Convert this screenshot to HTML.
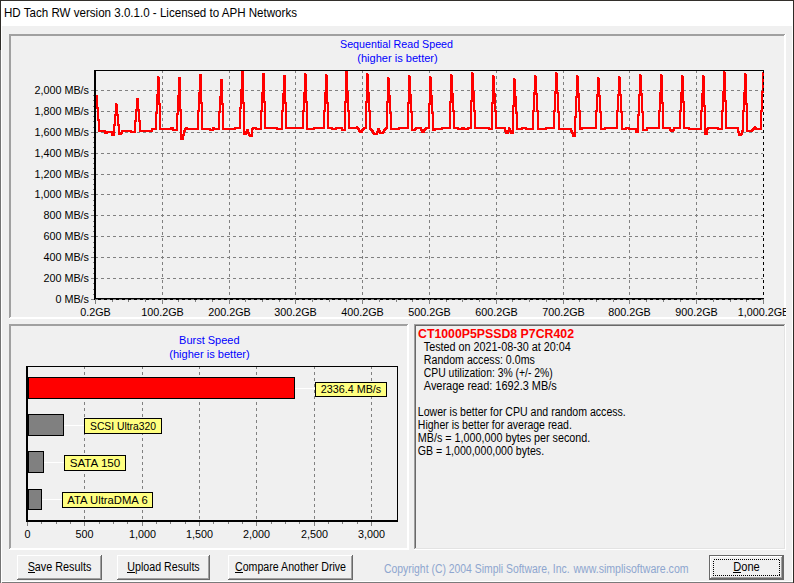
<!DOCTYPE html>
<html><head><meta charset="utf-8"><title>HD Tach RW</title><style>
html,body{margin:0;padding:0;background:#f0f0f0;width:794px;height:583px;overflow:hidden;font-family:"Liberation Sans",sans-serif}
svg{display:block}
svg text{shape-rendering:auto}
</style></head><body><svg width="794" height="583" viewBox="0 0 794 583" font-family="Liberation Sans, sans-serif" shape-rendering="crispEdges"><rect x="0" y="0" width="794" height="583" fill="#f0f0f0"/><rect x="0" y="0" width="794" height="26" fill="#ffffff"/><rect x="0" y="0" width="794" height="1" fill="#332f2b"/><rect x="0" y="0" width="1" height="583" fill="#2e2b27"/><rect x="0" y="50" width="1" height="533" fill="#737373"/><rect x="793" y="0" width="1" height="583" fill="#2e2b27"/><rect x="1" y="26" width="1" height="556" fill="#ffffff"/><rect x="792" y="26" width="1" height="556" fill="#ffffff"/><text x="4" y="16.8" font-size="12.4" textLength="293.0" lengthAdjust="spacingAndGlyphs">HD Tach RW version 3.0.1.0 - Licensed to APH Networks</text><rect x="9" y="34" width="777" height="1" fill="#a0a0a0"/><rect x="9" y="34" width="1" height="285" fill="#a0a0a0"/><rect x="10" y="35" width="775" height="1" fill="#a0a0a0"/><rect x="10" y="35" width="1" height="283" fill="#a0a0a0"/><rect x="9" y="318" width="777" height="1" fill="#ffffff"/><rect x="785" y="34" width="1" height="285" fill="#ffffff"/><rect x="10" y="317" width="775" height="1" fill="#ffffff"/><rect x="784" y="35" width="1" height="283" fill="#ffffff"/><rect x="9" y="324" width="400" height="1" fill="#a0a0a0"/><rect x="9" y="324" width="1" height="226" fill="#a0a0a0"/><rect x="10" y="325" width="398" height="1" fill="#a0a0a0"/><rect x="10" y="325" width="1" height="224" fill="#a0a0a0"/><rect x="9" y="549" width="400" height="1" fill="#ffffff"/><rect x="408" y="324" width="1" height="226" fill="#ffffff"/><rect x="10" y="548" width="398" height="1" fill="#ffffff"/><rect x="407" y="325" width="1" height="224" fill="#ffffff"/><rect x="414" y="324" width="372" height="1" fill="#a0a0a0"/><rect x="414" y="324" width="1" height="226" fill="#a0a0a0"/><rect x="415" y="325" width="370" height="1" fill="#696969"/><rect x="415" y="325" width="1" height="224" fill="#696969"/><rect x="414" y="549" width="372" height="1" fill="#ffffff"/><rect x="785" y="324" width="1" height="226" fill="#ffffff"/><rect x="415" y="548" width="370" height="1" fill="#e3e3e3"/><rect x="784" y="325" width="1" height="224" fill="#e3e3e3"/><text x="396.5" y="48" font-size="10.8" fill="#0000ff" text-anchor="middle" textLength="113.0" lengthAdjust="spacingAndGlyphs">Sequential Read Speed</text><text x="397.5" y="62" font-size="10.8" fill="#0000ff" text-anchor="middle" textLength="80.5" lengthAdjust="spacingAndGlyphs">(higher is better)</text><path d="M95 278h3v1h-3zM101 278h3v1h-3zM107 278h3v1h-3zM113 278h3v1h-3zM119 278h3v1h-3zM125 278h3v1h-3zM131 278h3v1h-3zM137 278h3v1h-3zM143 278h3v1h-3zM149 278h3v1h-3zM155 278h3v1h-3zM161 278h3v1h-3zM167 278h3v1h-3zM173 278h3v1h-3zM179 278h3v1h-3zM185 278h3v1h-3zM191 278h3v1h-3zM197 278h3v1h-3zM203 278h3v1h-3zM209 278h3v1h-3zM215 278h3v1h-3zM221 278h3v1h-3zM227 278h3v1h-3zM233 278h3v1h-3zM239 278h3v1h-3zM245 278h3v1h-3zM251 278h3v1h-3zM257 278h3v1h-3zM263 278h3v1h-3zM269 278h3v1h-3zM275 278h3v1h-3zM281 278h3v1h-3zM287 278h3v1h-3zM293 278h3v1h-3zM299 278h3v1h-3zM305 278h3v1h-3zM311 278h3v1h-3zM317 278h3v1h-3zM323 278h3v1h-3zM329 278h3v1h-3zM335 278h3v1h-3zM341 278h3v1h-3zM347 278h3v1h-3zM353 278h3v1h-3zM359 278h3v1h-3zM365 278h3v1h-3zM371 278h3v1h-3zM377 278h3v1h-3zM383 278h3v1h-3zM389 278h3v1h-3zM395 278h3v1h-3zM401 278h3v1h-3zM407 278h3v1h-3zM413 278h3v1h-3zM419 278h3v1h-3zM425 278h3v1h-3zM431 278h3v1h-3zM437 278h3v1h-3zM443 278h3v1h-3zM449 278h3v1h-3zM455 278h3v1h-3zM461 278h3v1h-3zM467 278h3v1h-3zM473 278h3v1h-3zM479 278h3v1h-3zM485 278h3v1h-3zM491 278h3v1h-3zM497 278h3v1h-3zM503 278h3v1h-3zM509 278h3v1h-3zM515 278h3v1h-3zM521 278h3v1h-3zM527 278h3v1h-3zM533 278h3v1h-3zM539 278h3v1h-3zM545 278h3v1h-3zM551 278h3v1h-3zM557 278h3v1h-3zM563 278h3v1h-3zM569 278h3v1h-3zM575 278h3v1h-3zM581 278h3v1h-3zM587 278h3v1h-3zM593 278h3v1h-3zM599 278h3v1h-3zM605 278h3v1h-3zM611 278h3v1h-3zM617 278h3v1h-3zM623 278h3v1h-3zM629 278h3v1h-3zM635 278h3v1h-3zM641 278h3v1h-3zM647 278h3v1h-3zM653 278h3v1h-3zM659 278h3v1h-3zM665 278h3v1h-3zM671 278h3v1h-3zM677 278h3v1h-3zM683 278h3v1h-3zM689 278h3v1h-3zM695 278h3v1h-3zM701 278h3v1h-3zM707 278h3v1h-3zM713 278h3v1h-3zM719 278h3v1h-3zM725 278h3v1h-3zM731 278h3v1h-3zM737 278h3v1h-3zM743 278h3v1h-3zM749 278h3v1h-3zM755 278h3v1h-3zM761 278h2v1h-2z" fill="#808080"/><path d="M95 257h3v1h-3zM101 257h3v1h-3zM107 257h3v1h-3zM113 257h3v1h-3zM119 257h3v1h-3zM125 257h3v1h-3zM131 257h3v1h-3zM137 257h3v1h-3zM143 257h3v1h-3zM149 257h3v1h-3zM155 257h3v1h-3zM161 257h3v1h-3zM167 257h3v1h-3zM173 257h3v1h-3zM179 257h3v1h-3zM185 257h3v1h-3zM191 257h3v1h-3zM197 257h3v1h-3zM203 257h3v1h-3zM209 257h3v1h-3zM215 257h3v1h-3zM221 257h3v1h-3zM227 257h3v1h-3zM233 257h3v1h-3zM239 257h3v1h-3zM245 257h3v1h-3zM251 257h3v1h-3zM257 257h3v1h-3zM263 257h3v1h-3zM269 257h3v1h-3zM275 257h3v1h-3zM281 257h3v1h-3zM287 257h3v1h-3zM293 257h3v1h-3zM299 257h3v1h-3zM305 257h3v1h-3zM311 257h3v1h-3zM317 257h3v1h-3zM323 257h3v1h-3zM329 257h3v1h-3zM335 257h3v1h-3zM341 257h3v1h-3zM347 257h3v1h-3zM353 257h3v1h-3zM359 257h3v1h-3zM365 257h3v1h-3zM371 257h3v1h-3zM377 257h3v1h-3zM383 257h3v1h-3zM389 257h3v1h-3zM395 257h3v1h-3zM401 257h3v1h-3zM407 257h3v1h-3zM413 257h3v1h-3zM419 257h3v1h-3zM425 257h3v1h-3zM431 257h3v1h-3zM437 257h3v1h-3zM443 257h3v1h-3zM449 257h3v1h-3zM455 257h3v1h-3zM461 257h3v1h-3zM467 257h3v1h-3zM473 257h3v1h-3zM479 257h3v1h-3zM485 257h3v1h-3zM491 257h3v1h-3zM497 257h3v1h-3zM503 257h3v1h-3zM509 257h3v1h-3zM515 257h3v1h-3zM521 257h3v1h-3zM527 257h3v1h-3zM533 257h3v1h-3zM539 257h3v1h-3zM545 257h3v1h-3zM551 257h3v1h-3zM557 257h3v1h-3zM563 257h3v1h-3zM569 257h3v1h-3zM575 257h3v1h-3zM581 257h3v1h-3zM587 257h3v1h-3zM593 257h3v1h-3zM599 257h3v1h-3zM605 257h3v1h-3zM611 257h3v1h-3zM617 257h3v1h-3zM623 257h3v1h-3zM629 257h3v1h-3zM635 257h3v1h-3zM641 257h3v1h-3zM647 257h3v1h-3zM653 257h3v1h-3zM659 257h3v1h-3zM665 257h3v1h-3zM671 257h3v1h-3zM677 257h3v1h-3zM683 257h3v1h-3zM689 257h3v1h-3zM695 257h3v1h-3zM701 257h3v1h-3zM707 257h3v1h-3zM713 257h3v1h-3zM719 257h3v1h-3zM725 257h3v1h-3zM731 257h3v1h-3zM737 257h3v1h-3zM743 257h3v1h-3zM749 257h3v1h-3zM755 257h3v1h-3zM761 257h2v1h-2z" fill="#808080"/><path d="M95 236h3v1h-3zM101 236h3v1h-3zM107 236h3v1h-3zM113 236h3v1h-3zM119 236h3v1h-3zM125 236h3v1h-3zM131 236h3v1h-3zM137 236h3v1h-3zM143 236h3v1h-3zM149 236h3v1h-3zM155 236h3v1h-3zM161 236h3v1h-3zM167 236h3v1h-3zM173 236h3v1h-3zM179 236h3v1h-3zM185 236h3v1h-3zM191 236h3v1h-3zM197 236h3v1h-3zM203 236h3v1h-3zM209 236h3v1h-3zM215 236h3v1h-3zM221 236h3v1h-3zM227 236h3v1h-3zM233 236h3v1h-3zM239 236h3v1h-3zM245 236h3v1h-3zM251 236h3v1h-3zM257 236h3v1h-3zM263 236h3v1h-3zM269 236h3v1h-3zM275 236h3v1h-3zM281 236h3v1h-3zM287 236h3v1h-3zM293 236h3v1h-3zM299 236h3v1h-3zM305 236h3v1h-3zM311 236h3v1h-3zM317 236h3v1h-3zM323 236h3v1h-3zM329 236h3v1h-3zM335 236h3v1h-3zM341 236h3v1h-3zM347 236h3v1h-3zM353 236h3v1h-3zM359 236h3v1h-3zM365 236h3v1h-3zM371 236h3v1h-3zM377 236h3v1h-3zM383 236h3v1h-3zM389 236h3v1h-3zM395 236h3v1h-3zM401 236h3v1h-3zM407 236h3v1h-3zM413 236h3v1h-3zM419 236h3v1h-3zM425 236h3v1h-3zM431 236h3v1h-3zM437 236h3v1h-3zM443 236h3v1h-3zM449 236h3v1h-3zM455 236h3v1h-3zM461 236h3v1h-3zM467 236h3v1h-3zM473 236h3v1h-3zM479 236h3v1h-3zM485 236h3v1h-3zM491 236h3v1h-3zM497 236h3v1h-3zM503 236h3v1h-3zM509 236h3v1h-3zM515 236h3v1h-3zM521 236h3v1h-3zM527 236h3v1h-3zM533 236h3v1h-3zM539 236h3v1h-3zM545 236h3v1h-3zM551 236h3v1h-3zM557 236h3v1h-3zM563 236h3v1h-3zM569 236h3v1h-3zM575 236h3v1h-3zM581 236h3v1h-3zM587 236h3v1h-3zM593 236h3v1h-3zM599 236h3v1h-3zM605 236h3v1h-3zM611 236h3v1h-3zM617 236h3v1h-3zM623 236h3v1h-3zM629 236h3v1h-3zM635 236h3v1h-3zM641 236h3v1h-3zM647 236h3v1h-3zM653 236h3v1h-3zM659 236h3v1h-3zM665 236h3v1h-3zM671 236h3v1h-3zM677 236h3v1h-3zM683 236h3v1h-3zM689 236h3v1h-3zM695 236h3v1h-3zM701 236h3v1h-3zM707 236h3v1h-3zM713 236h3v1h-3zM719 236h3v1h-3zM725 236h3v1h-3zM731 236h3v1h-3zM737 236h3v1h-3zM743 236h3v1h-3zM749 236h3v1h-3zM755 236h3v1h-3zM761 236h2v1h-2z" fill="#808080"/><path d="M95 215h3v1h-3zM101 215h3v1h-3zM107 215h3v1h-3zM113 215h3v1h-3zM119 215h3v1h-3zM125 215h3v1h-3zM131 215h3v1h-3zM137 215h3v1h-3zM143 215h3v1h-3zM149 215h3v1h-3zM155 215h3v1h-3zM161 215h3v1h-3zM167 215h3v1h-3zM173 215h3v1h-3zM179 215h3v1h-3zM185 215h3v1h-3zM191 215h3v1h-3zM197 215h3v1h-3zM203 215h3v1h-3zM209 215h3v1h-3zM215 215h3v1h-3zM221 215h3v1h-3zM227 215h3v1h-3zM233 215h3v1h-3zM239 215h3v1h-3zM245 215h3v1h-3zM251 215h3v1h-3zM257 215h3v1h-3zM263 215h3v1h-3zM269 215h3v1h-3zM275 215h3v1h-3zM281 215h3v1h-3zM287 215h3v1h-3zM293 215h3v1h-3zM299 215h3v1h-3zM305 215h3v1h-3zM311 215h3v1h-3zM317 215h3v1h-3zM323 215h3v1h-3zM329 215h3v1h-3zM335 215h3v1h-3zM341 215h3v1h-3zM347 215h3v1h-3zM353 215h3v1h-3zM359 215h3v1h-3zM365 215h3v1h-3zM371 215h3v1h-3zM377 215h3v1h-3zM383 215h3v1h-3zM389 215h3v1h-3zM395 215h3v1h-3zM401 215h3v1h-3zM407 215h3v1h-3zM413 215h3v1h-3zM419 215h3v1h-3zM425 215h3v1h-3zM431 215h3v1h-3zM437 215h3v1h-3zM443 215h3v1h-3zM449 215h3v1h-3zM455 215h3v1h-3zM461 215h3v1h-3zM467 215h3v1h-3zM473 215h3v1h-3zM479 215h3v1h-3zM485 215h3v1h-3zM491 215h3v1h-3zM497 215h3v1h-3zM503 215h3v1h-3zM509 215h3v1h-3zM515 215h3v1h-3zM521 215h3v1h-3zM527 215h3v1h-3zM533 215h3v1h-3zM539 215h3v1h-3zM545 215h3v1h-3zM551 215h3v1h-3zM557 215h3v1h-3zM563 215h3v1h-3zM569 215h3v1h-3zM575 215h3v1h-3zM581 215h3v1h-3zM587 215h3v1h-3zM593 215h3v1h-3zM599 215h3v1h-3zM605 215h3v1h-3zM611 215h3v1h-3zM617 215h3v1h-3zM623 215h3v1h-3zM629 215h3v1h-3zM635 215h3v1h-3zM641 215h3v1h-3zM647 215h3v1h-3zM653 215h3v1h-3zM659 215h3v1h-3zM665 215h3v1h-3zM671 215h3v1h-3zM677 215h3v1h-3zM683 215h3v1h-3zM689 215h3v1h-3zM695 215h3v1h-3zM701 215h3v1h-3zM707 215h3v1h-3zM713 215h3v1h-3zM719 215h3v1h-3zM725 215h3v1h-3zM731 215h3v1h-3zM737 215h3v1h-3zM743 215h3v1h-3zM749 215h3v1h-3zM755 215h3v1h-3zM761 215h2v1h-2z" fill="#808080"/><path d="M95 194h3v1h-3zM101 194h3v1h-3zM107 194h3v1h-3zM113 194h3v1h-3zM119 194h3v1h-3zM125 194h3v1h-3zM131 194h3v1h-3zM137 194h3v1h-3zM143 194h3v1h-3zM149 194h3v1h-3zM155 194h3v1h-3zM161 194h3v1h-3zM167 194h3v1h-3zM173 194h3v1h-3zM179 194h3v1h-3zM185 194h3v1h-3zM191 194h3v1h-3zM197 194h3v1h-3zM203 194h3v1h-3zM209 194h3v1h-3zM215 194h3v1h-3zM221 194h3v1h-3zM227 194h3v1h-3zM233 194h3v1h-3zM239 194h3v1h-3zM245 194h3v1h-3zM251 194h3v1h-3zM257 194h3v1h-3zM263 194h3v1h-3zM269 194h3v1h-3zM275 194h3v1h-3zM281 194h3v1h-3zM287 194h3v1h-3zM293 194h3v1h-3zM299 194h3v1h-3zM305 194h3v1h-3zM311 194h3v1h-3zM317 194h3v1h-3zM323 194h3v1h-3zM329 194h3v1h-3zM335 194h3v1h-3zM341 194h3v1h-3zM347 194h3v1h-3zM353 194h3v1h-3zM359 194h3v1h-3zM365 194h3v1h-3zM371 194h3v1h-3zM377 194h3v1h-3zM383 194h3v1h-3zM389 194h3v1h-3zM395 194h3v1h-3zM401 194h3v1h-3zM407 194h3v1h-3zM413 194h3v1h-3zM419 194h3v1h-3zM425 194h3v1h-3zM431 194h3v1h-3zM437 194h3v1h-3zM443 194h3v1h-3zM449 194h3v1h-3zM455 194h3v1h-3zM461 194h3v1h-3zM467 194h3v1h-3zM473 194h3v1h-3zM479 194h3v1h-3zM485 194h3v1h-3zM491 194h3v1h-3zM497 194h3v1h-3zM503 194h3v1h-3zM509 194h3v1h-3zM515 194h3v1h-3zM521 194h3v1h-3zM527 194h3v1h-3zM533 194h3v1h-3zM539 194h3v1h-3zM545 194h3v1h-3zM551 194h3v1h-3zM557 194h3v1h-3zM563 194h3v1h-3zM569 194h3v1h-3zM575 194h3v1h-3zM581 194h3v1h-3zM587 194h3v1h-3zM593 194h3v1h-3zM599 194h3v1h-3zM605 194h3v1h-3zM611 194h3v1h-3zM617 194h3v1h-3zM623 194h3v1h-3zM629 194h3v1h-3zM635 194h3v1h-3zM641 194h3v1h-3zM647 194h3v1h-3zM653 194h3v1h-3zM659 194h3v1h-3zM665 194h3v1h-3zM671 194h3v1h-3zM677 194h3v1h-3zM683 194h3v1h-3zM689 194h3v1h-3zM695 194h3v1h-3zM701 194h3v1h-3zM707 194h3v1h-3zM713 194h3v1h-3zM719 194h3v1h-3zM725 194h3v1h-3zM731 194h3v1h-3zM737 194h3v1h-3zM743 194h3v1h-3zM749 194h3v1h-3zM755 194h3v1h-3zM761 194h2v1h-2z" fill="#808080"/><path d="M95 174h3v1h-3zM101 174h3v1h-3zM107 174h3v1h-3zM113 174h3v1h-3zM119 174h3v1h-3zM125 174h3v1h-3zM131 174h3v1h-3zM137 174h3v1h-3zM143 174h3v1h-3zM149 174h3v1h-3zM155 174h3v1h-3zM161 174h3v1h-3zM167 174h3v1h-3zM173 174h3v1h-3zM179 174h3v1h-3zM185 174h3v1h-3zM191 174h3v1h-3zM197 174h3v1h-3zM203 174h3v1h-3zM209 174h3v1h-3zM215 174h3v1h-3zM221 174h3v1h-3zM227 174h3v1h-3zM233 174h3v1h-3zM239 174h3v1h-3zM245 174h3v1h-3zM251 174h3v1h-3zM257 174h3v1h-3zM263 174h3v1h-3zM269 174h3v1h-3zM275 174h3v1h-3zM281 174h3v1h-3zM287 174h3v1h-3zM293 174h3v1h-3zM299 174h3v1h-3zM305 174h3v1h-3zM311 174h3v1h-3zM317 174h3v1h-3zM323 174h3v1h-3zM329 174h3v1h-3zM335 174h3v1h-3zM341 174h3v1h-3zM347 174h3v1h-3zM353 174h3v1h-3zM359 174h3v1h-3zM365 174h3v1h-3zM371 174h3v1h-3zM377 174h3v1h-3zM383 174h3v1h-3zM389 174h3v1h-3zM395 174h3v1h-3zM401 174h3v1h-3zM407 174h3v1h-3zM413 174h3v1h-3zM419 174h3v1h-3zM425 174h3v1h-3zM431 174h3v1h-3zM437 174h3v1h-3zM443 174h3v1h-3zM449 174h3v1h-3zM455 174h3v1h-3zM461 174h3v1h-3zM467 174h3v1h-3zM473 174h3v1h-3zM479 174h3v1h-3zM485 174h3v1h-3zM491 174h3v1h-3zM497 174h3v1h-3zM503 174h3v1h-3zM509 174h3v1h-3zM515 174h3v1h-3zM521 174h3v1h-3zM527 174h3v1h-3zM533 174h3v1h-3zM539 174h3v1h-3zM545 174h3v1h-3zM551 174h3v1h-3zM557 174h3v1h-3zM563 174h3v1h-3zM569 174h3v1h-3zM575 174h3v1h-3zM581 174h3v1h-3zM587 174h3v1h-3zM593 174h3v1h-3zM599 174h3v1h-3zM605 174h3v1h-3zM611 174h3v1h-3zM617 174h3v1h-3zM623 174h3v1h-3zM629 174h3v1h-3zM635 174h3v1h-3zM641 174h3v1h-3zM647 174h3v1h-3zM653 174h3v1h-3zM659 174h3v1h-3zM665 174h3v1h-3zM671 174h3v1h-3zM677 174h3v1h-3zM683 174h3v1h-3zM689 174h3v1h-3zM695 174h3v1h-3zM701 174h3v1h-3zM707 174h3v1h-3zM713 174h3v1h-3zM719 174h3v1h-3zM725 174h3v1h-3zM731 174h3v1h-3zM737 174h3v1h-3zM743 174h3v1h-3zM749 174h3v1h-3zM755 174h3v1h-3zM761 174h2v1h-2z" fill="#808080"/><path d="M95 153h3v1h-3zM101 153h3v1h-3zM107 153h3v1h-3zM113 153h3v1h-3zM119 153h3v1h-3zM125 153h3v1h-3zM131 153h3v1h-3zM137 153h3v1h-3zM143 153h3v1h-3zM149 153h3v1h-3zM155 153h3v1h-3zM161 153h3v1h-3zM167 153h3v1h-3zM173 153h3v1h-3zM179 153h3v1h-3zM185 153h3v1h-3zM191 153h3v1h-3zM197 153h3v1h-3zM203 153h3v1h-3zM209 153h3v1h-3zM215 153h3v1h-3zM221 153h3v1h-3zM227 153h3v1h-3zM233 153h3v1h-3zM239 153h3v1h-3zM245 153h3v1h-3zM251 153h3v1h-3zM257 153h3v1h-3zM263 153h3v1h-3zM269 153h3v1h-3zM275 153h3v1h-3zM281 153h3v1h-3zM287 153h3v1h-3zM293 153h3v1h-3zM299 153h3v1h-3zM305 153h3v1h-3zM311 153h3v1h-3zM317 153h3v1h-3zM323 153h3v1h-3zM329 153h3v1h-3zM335 153h3v1h-3zM341 153h3v1h-3zM347 153h3v1h-3zM353 153h3v1h-3zM359 153h3v1h-3zM365 153h3v1h-3zM371 153h3v1h-3zM377 153h3v1h-3zM383 153h3v1h-3zM389 153h3v1h-3zM395 153h3v1h-3zM401 153h3v1h-3zM407 153h3v1h-3zM413 153h3v1h-3zM419 153h3v1h-3zM425 153h3v1h-3zM431 153h3v1h-3zM437 153h3v1h-3zM443 153h3v1h-3zM449 153h3v1h-3zM455 153h3v1h-3zM461 153h3v1h-3zM467 153h3v1h-3zM473 153h3v1h-3zM479 153h3v1h-3zM485 153h3v1h-3zM491 153h3v1h-3zM497 153h3v1h-3zM503 153h3v1h-3zM509 153h3v1h-3zM515 153h3v1h-3zM521 153h3v1h-3zM527 153h3v1h-3zM533 153h3v1h-3zM539 153h3v1h-3zM545 153h3v1h-3zM551 153h3v1h-3zM557 153h3v1h-3zM563 153h3v1h-3zM569 153h3v1h-3zM575 153h3v1h-3zM581 153h3v1h-3zM587 153h3v1h-3zM593 153h3v1h-3zM599 153h3v1h-3zM605 153h3v1h-3zM611 153h3v1h-3zM617 153h3v1h-3zM623 153h3v1h-3zM629 153h3v1h-3zM635 153h3v1h-3zM641 153h3v1h-3zM647 153h3v1h-3zM653 153h3v1h-3zM659 153h3v1h-3zM665 153h3v1h-3zM671 153h3v1h-3zM677 153h3v1h-3zM683 153h3v1h-3zM689 153h3v1h-3zM695 153h3v1h-3zM701 153h3v1h-3zM707 153h3v1h-3zM713 153h3v1h-3zM719 153h3v1h-3zM725 153h3v1h-3zM731 153h3v1h-3zM737 153h3v1h-3zM743 153h3v1h-3zM749 153h3v1h-3zM755 153h3v1h-3zM761 153h2v1h-2z" fill="#808080"/><path d="M95 132h3v1h-3zM101 132h3v1h-3zM107 132h3v1h-3zM113 132h3v1h-3zM119 132h3v1h-3zM125 132h3v1h-3zM131 132h3v1h-3zM137 132h3v1h-3zM143 132h3v1h-3zM149 132h3v1h-3zM155 132h3v1h-3zM161 132h3v1h-3zM167 132h3v1h-3zM173 132h3v1h-3zM179 132h3v1h-3zM185 132h3v1h-3zM191 132h3v1h-3zM197 132h3v1h-3zM203 132h3v1h-3zM209 132h3v1h-3zM215 132h3v1h-3zM221 132h3v1h-3zM227 132h3v1h-3zM233 132h3v1h-3zM239 132h3v1h-3zM245 132h3v1h-3zM251 132h3v1h-3zM257 132h3v1h-3zM263 132h3v1h-3zM269 132h3v1h-3zM275 132h3v1h-3zM281 132h3v1h-3zM287 132h3v1h-3zM293 132h3v1h-3zM299 132h3v1h-3zM305 132h3v1h-3zM311 132h3v1h-3zM317 132h3v1h-3zM323 132h3v1h-3zM329 132h3v1h-3zM335 132h3v1h-3zM341 132h3v1h-3zM347 132h3v1h-3zM353 132h3v1h-3zM359 132h3v1h-3zM365 132h3v1h-3zM371 132h3v1h-3zM377 132h3v1h-3zM383 132h3v1h-3zM389 132h3v1h-3zM395 132h3v1h-3zM401 132h3v1h-3zM407 132h3v1h-3zM413 132h3v1h-3zM419 132h3v1h-3zM425 132h3v1h-3zM431 132h3v1h-3zM437 132h3v1h-3zM443 132h3v1h-3zM449 132h3v1h-3zM455 132h3v1h-3zM461 132h3v1h-3zM467 132h3v1h-3zM473 132h3v1h-3zM479 132h3v1h-3zM485 132h3v1h-3zM491 132h3v1h-3zM497 132h3v1h-3zM503 132h3v1h-3zM509 132h3v1h-3zM515 132h3v1h-3zM521 132h3v1h-3zM527 132h3v1h-3zM533 132h3v1h-3zM539 132h3v1h-3zM545 132h3v1h-3zM551 132h3v1h-3zM557 132h3v1h-3zM563 132h3v1h-3zM569 132h3v1h-3zM575 132h3v1h-3zM581 132h3v1h-3zM587 132h3v1h-3zM593 132h3v1h-3zM599 132h3v1h-3zM605 132h3v1h-3zM611 132h3v1h-3zM617 132h3v1h-3zM623 132h3v1h-3zM629 132h3v1h-3zM635 132h3v1h-3zM641 132h3v1h-3zM647 132h3v1h-3zM653 132h3v1h-3zM659 132h3v1h-3zM665 132h3v1h-3zM671 132h3v1h-3zM677 132h3v1h-3zM683 132h3v1h-3zM689 132h3v1h-3zM695 132h3v1h-3zM701 132h3v1h-3zM707 132h3v1h-3zM713 132h3v1h-3zM719 132h3v1h-3zM725 132h3v1h-3zM731 132h3v1h-3zM737 132h3v1h-3zM743 132h3v1h-3zM749 132h3v1h-3zM755 132h3v1h-3zM761 132h2v1h-2z" fill="#808080"/><path d="M95 111h3v1h-3zM101 111h3v1h-3zM107 111h3v1h-3zM113 111h3v1h-3zM119 111h3v1h-3zM125 111h3v1h-3zM131 111h3v1h-3zM137 111h3v1h-3zM143 111h3v1h-3zM149 111h3v1h-3zM155 111h3v1h-3zM161 111h3v1h-3zM167 111h3v1h-3zM173 111h3v1h-3zM179 111h3v1h-3zM185 111h3v1h-3zM191 111h3v1h-3zM197 111h3v1h-3zM203 111h3v1h-3zM209 111h3v1h-3zM215 111h3v1h-3zM221 111h3v1h-3zM227 111h3v1h-3zM233 111h3v1h-3zM239 111h3v1h-3zM245 111h3v1h-3zM251 111h3v1h-3zM257 111h3v1h-3zM263 111h3v1h-3zM269 111h3v1h-3zM275 111h3v1h-3zM281 111h3v1h-3zM287 111h3v1h-3zM293 111h3v1h-3zM299 111h3v1h-3zM305 111h3v1h-3zM311 111h3v1h-3zM317 111h3v1h-3zM323 111h3v1h-3zM329 111h3v1h-3zM335 111h3v1h-3zM341 111h3v1h-3zM347 111h3v1h-3zM353 111h3v1h-3zM359 111h3v1h-3zM365 111h3v1h-3zM371 111h3v1h-3zM377 111h3v1h-3zM383 111h3v1h-3zM389 111h3v1h-3zM395 111h3v1h-3zM401 111h3v1h-3zM407 111h3v1h-3zM413 111h3v1h-3zM419 111h3v1h-3zM425 111h3v1h-3zM431 111h3v1h-3zM437 111h3v1h-3zM443 111h3v1h-3zM449 111h3v1h-3zM455 111h3v1h-3zM461 111h3v1h-3zM467 111h3v1h-3zM473 111h3v1h-3zM479 111h3v1h-3zM485 111h3v1h-3zM491 111h3v1h-3zM497 111h3v1h-3zM503 111h3v1h-3zM509 111h3v1h-3zM515 111h3v1h-3zM521 111h3v1h-3zM527 111h3v1h-3zM533 111h3v1h-3zM539 111h3v1h-3zM545 111h3v1h-3zM551 111h3v1h-3zM557 111h3v1h-3zM563 111h3v1h-3zM569 111h3v1h-3zM575 111h3v1h-3zM581 111h3v1h-3zM587 111h3v1h-3zM593 111h3v1h-3zM599 111h3v1h-3zM605 111h3v1h-3zM611 111h3v1h-3zM617 111h3v1h-3zM623 111h3v1h-3zM629 111h3v1h-3zM635 111h3v1h-3zM641 111h3v1h-3zM647 111h3v1h-3zM653 111h3v1h-3zM659 111h3v1h-3zM665 111h3v1h-3zM671 111h3v1h-3zM677 111h3v1h-3zM683 111h3v1h-3zM689 111h3v1h-3zM695 111h3v1h-3zM701 111h3v1h-3zM707 111h3v1h-3zM713 111h3v1h-3zM719 111h3v1h-3zM725 111h3v1h-3zM731 111h3v1h-3zM737 111h3v1h-3zM743 111h3v1h-3zM749 111h3v1h-3zM755 111h3v1h-3zM761 111h2v1h-2z" fill="#808080"/><path d="M95 90h3v1h-3zM101 90h3v1h-3zM107 90h3v1h-3zM113 90h3v1h-3zM119 90h3v1h-3zM125 90h3v1h-3zM131 90h3v1h-3zM137 90h3v1h-3zM143 90h3v1h-3zM149 90h3v1h-3zM155 90h3v1h-3zM161 90h3v1h-3zM167 90h3v1h-3zM173 90h3v1h-3zM179 90h3v1h-3zM185 90h3v1h-3zM191 90h3v1h-3zM197 90h3v1h-3zM203 90h3v1h-3zM209 90h3v1h-3zM215 90h3v1h-3zM221 90h3v1h-3zM227 90h3v1h-3zM233 90h3v1h-3zM239 90h3v1h-3zM245 90h3v1h-3zM251 90h3v1h-3zM257 90h3v1h-3zM263 90h3v1h-3zM269 90h3v1h-3zM275 90h3v1h-3zM281 90h3v1h-3zM287 90h3v1h-3zM293 90h3v1h-3zM299 90h3v1h-3zM305 90h3v1h-3zM311 90h3v1h-3zM317 90h3v1h-3zM323 90h3v1h-3zM329 90h3v1h-3zM335 90h3v1h-3zM341 90h3v1h-3zM347 90h3v1h-3zM353 90h3v1h-3zM359 90h3v1h-3zM365 90h3v1h-3zM371 90h3v1h-3zM377 90h3v1h-3zM383 90h3v1h-3zM389 90h3v1h-3zM395 90h3v1h-3zM401 90h3v1h-3zM407 90h3v1h-3zM413 90h3v1h-3zM419 90h3v1h-3zM425 90h3v1h-3zM431 90h3v1h-3zM437 90h3v1h-3zM443 90h3v1h-3zM449 90h3v1h-3zM455 90h3v1h-3zM461 90h3v1h-3zM467 90h3v1h-3zM473 90h3v1h-3zM479 90h3v1h-3zM485 90h3v1h-3zM491 90h3v1h-3zM497 90h3v1h-3zM503 90h3v1h-3zM509 90h3v1h-3zM515 90h3v1h-3zM521 90h3v1h-3zM527 90h3v1h-3zM533 90h3v1h-3zM539 90h3v1h-3zM545 90h3v1h-3zM551 90h3v1h-3zM557 90h3v1h-3zM563 90h3v1h-3zM569 90h3v1h-3zM575 90h3v1h-3zM581 90h3v1h-3zM587 90h3v1h-3zM593 90h3v1h-3zM599 90h3v1h-3zM605 90h3v1h-3zM611 90h3v1h-3zM617 90h3v1h-3zM623 90h3v1h-3zM629 90h3v1h-3zM635 90h3v1h-3zM641 90h3v1h-3zM647 90h3v1h-3zM653 90h3v1h-3zM659 90h3v1h-3zM665 90h3v1h-3zM671 90h3v1h-3zM677 90h3v1h-3zM683 90h3v1h-3zM689 90h3v1h-3zM695 90h3v1h-3zM701 90h3v1h-3zM707 90h3v1h-3zM713 90h3v1h-3zM719 90h3v1h-3zM725 90h3v1h-3zM731 90h3v1h-3zM737 90h3v1h-3zM743 90h3v1h-3zM749 90h3v1h-3zM755 90h3v1h-3zM761 90h2v1h-2z" fill="#808080"/><rect x="91" y="299" width="3" height="1" fill="#808080"/><text x="89" y="303" font-size="10.8" text-anchor="end">0 MB/s</text><rect x="93" y="294" width="1" height="1" fill="#808080"/><rect x="93" y="289" width="1" height="1" fill="#808080"/><rect x="93" y="283" width="1" height="1" fill="#808080"/><rect x="91" y="278" width="3" height="1" fill="#808080"/><text x="89" y="282" font-size="10.8" text-anchor="end">200 MB/s</text><rect x="93" y="273" width="1" height="1" fill="#808080"/><rect x="93" y="268" width="1" height="1" fill="#808080"/><rect x="93" y="262" width="1" height="1" fill="#808080"/><rect x="91" y="257" width="3" height="1" fill="#808080"/><text x="89" y="261" font-size="10.8" text-anchor="end">400 MB/s</text><rect x="93" y="252" width="1" height="1" fill="#808080"/><rect x="93" y="247" width="1" height="1" fill="#808080"/><rect x="93" y="242" width="1" height="1" fill="#808080"/><rect x="91" y="236" width="3" height="1" fill="#808080"/><text x="89" y="240" font-size="10.8" text-anchor="end">600 MB/s</text><rect x="93" y="231" width="1" height="1" fill="#808080"/><rect x="93" y="226" width="1" height="1" fill="#808080"/><rect x="93" y="221" width="1" height="1" fill="#808080"/><rect x="91" y="215" width="3" height="1" fill="#808080"/><text x="89" y="219" font-size="10.8" text-anchor="end">800 MB/s</text><rect x="93" y="210" width="1" height="1" fill="#808080"/><rect x="93" y="205" width="1" height="1" fill="#808080"/><rect x="93" y="200" width="1" height="1" fill="#808080"/><rect x="91" y="194" width="3" height="1" fill="#808080"/><text x="89" y="198" font-size="10.8" text-anchor="end">1,000 MB/s</text><rect x="93" y="189" width="1" height="1" fill="#808080"/><rect x="93" y="184" width="1" height="1" fill="#808080"/><rect x="93" y="179" width="1" height="1" fill="#808080"/><rect x="91" y="174" width="3" height="1" fill="#808080"/><text x="89" y="178" font-size="10.8" text-anchor="end">1,200 MB/s</text><rect x="93" y="168" width="1" height="1" fill="#808080"/><rect x="93" y="163" width="1" height="1" fill="#808080"/><rect x="93" y="158" width="1" height="1" fill="#808080"/><rect x="91" y="153" width="3" height="1" fill="#808080"/><text x="89" y="157" font-size="10.8" text-anchor="end">1,400 MB/s</text><rect x="93" y="147" width="1" height="1" fill="#808080"/><rect x="93" y="142" width="1" height="1" fill="#808080"/><rect x="93" y="137" width="1" height="1" fill="#808080"/><rect x="91" y="132" width="3" height="1" fill="#808080"/><text x="89" y="136" font-size="10.8" text-anchor="end">1,600 MB/s</text><rect x="93" y="127" width="1" height="1" fill="#808080"/><rect x="93" y="121" width="1" height="1" fill="#808080"/><rect x="93" y="116" width="1" height="1" fill="#808080"/><rect x="91" y="111" width="3" height="1" fill="#808080"/><text x="89" y="115" font-size="10.8" text-anchor="end">1,800 MB/s</text><rect x="93" y="106" width="1" height="1" fill="#808080"/><rect x="93" y="100" width="1" height="1" fill="#808080"/><rect x="93" y="95" width="1" height="1" fill="#808080"/><rect x="91" y="90" width="3" height="1" fill="#808080"/><text x="89" y="94" font-size="10.8" text-anchor="end">2,000 MB/s</text><path d="M162 70h1v3h-1zM162 76h1v3h-1zM162 82h1v3h-1zM162 88h1v3h-1zM162 94h1v3h-1zM162 100h1v3h-1zM162 106h1v3h-1zM162 112h1v3h-1zM162 118h1v3h-1zM162 124h1v3h-1zM162 130h1v3h-1zM162 136h1v3h-1zM162 142h1v3h-1zM162 148h1v3h-1zM162 154h1v3h-1zM162 160h1v3h-1zM162 166h1v3h-1zM162 172h1v3h-1zM162 178h1v3h-1zM162 184h1v3h-1zM162 190h1v3h-1zM162 196h1v3h-1zM162 202h1v3h-1zM162 208h1v3h-1zM162 214h1v3h-1zM162 220h1v3h-1zM162 226h1v3h-1zM162 232h1v3h-1zM162 238h1v3h-1zM162 244h1v3h-1zM162 250h1v3h-1zM162 256h1v3h-1zM162 262h1v3h-1zM162 268h1v3h-1zM162 274h1v3h-1zM162 280h1v3h-1zM162 286h1v3h-1zM162 292h1v3h-1z" fill="#808080"/><path d="M229 70h1v3h-1zM229 76h1v3h-1zM229 82h1v3h-1zM229 88h1v3h-1zM229 94h1v3h-1zM229 100h1v3h-1zM229 106h1v3h-1zM229 112h1v3h-1zM229 118h1v3h-1zM229 124h1v3h-1zM229 130h1v3h-1zM229 136h1v3h-1zM229 142h1v3h-1zM229 148h1v3h-1zM229 154h1v3h-1zM229 160h1v3h-1zM229 166h1v3h-1zM229 172h1v3h-1zM229 178h1v3h-1zM229 184h1v3h-1zM229 190h1v3h-1zM229 196h1v3h-1zM229 202h1v3h-1zM229 208h1v3h-1zM229 214h1v3h-1zM229 220h1v3h-1zM229 226h1v3h-1zM229 232h1v3h-1zM229 238h1v3h-1zM229 244h1v3h-1zM229 250h1v3h-1zM229 256h1v3h-1zM229 262h1v3h-1zM229 268h1v3h-1zM229 274h1v3h-1zM229 280h1v3h-1zM229 286h1v3h-1zM229 292h1v3h-1z" fill="#808080"/><path d="M295 70h1v3h-1zM295 76h1v3h-1zM295 82h1v3h-1zM295 88h1v3h-1zM295 94h1v3h-1zM295 100h1v3h-1zM295 106h1v3h-1zM295 112h1v3h-1zM295 118h1v3h-1zM295 124h1v3h-1zM295 130h1v3h-1zM295 136h1v3h-1zM295 142h1v3h-1zM295 148h1v3h-1zM295 154h1v3h-1zM295 160h1v3h-1zM295 166h1v3h-1zM295 172h1v3h-1zM295 178h1v3h-1zM295 184h1v3h-1zM295 190h1v3h-1zM295 196h1v3h-1zM295 202h1v3h-1zM295 208h1v3h-1zM295 214h1v3h-1zM295 220h1v3h-1zM295 226h1v3h-1zM295 232h1v3h-1zM295 238h1v3h-1zM295 244h1v3h-1zM295 250h1v3h-1zM295 256h1v3h-1zM295 262h1v3h-1zM295 268h1v3h-1zM295 274h1v3h-1zM295 280h1v3h-1zM295 286h1v3h-1zM295 292h1v3h-1z" fill="#808080"/><path d="M362 70h1v3h-1zM362 76h1v3h-1zM362 82h1v3h-1zM362 88h1v3h-1zM362 94h1v3h-1zM362 100h1v3h-1zM362 106h1v3h-1zM362 112h1v3h-1zM362 118h1v3h-1zM362 124h1v3h-1zM362 130h1v3h-1zM362 136h1v3h-1zM362 142h1v3h-1zM362 148h1v3h-1zM362 154h1v3h-1zM362 160h1v3h-1zM362 166h1v3h-1zM362 172h1v3h-1zM362 178h1v3h-1zM362 184h1v3h-1zM362 190h1v3h-1zM362 196h1v3h-1zM362 202h1v3h-1zM362 208h1v3h-1zM362 214h1v3h-1zM362 220h1v3h-1zM362 226h1v3h-1zM362 232h1v3h-1zM362 238h1v3h-1zM362 244h1v3h-1zM362 250h1v3h-1zM362 256h1v3h-1zM362 262h1v3h-1zM362 268h1v3h-1zM362 274h1v3h-1zM362 280h1v3h-1zM362 286h1v3h-1zM362 292h1v3h-1z" fill="#808080"/><path d="M429 70h1v3h-1zM429 76h1v3h-1zM429 82h1v3h-1zM429 88h1v3h-1zM429 94h1v3h-1zM429 100h1v3h-1zM429 106h1v3h-1zM429 112h1v3h-1zM429 118h1v3h-1zM429 124h1v3h-1zM429 130h1v3h-1zM429 136h1v3h-1zM429 142h1v3h-1zM429 148h1v3h-1zM429 154h1v3h-1zM429 160h1v3h-1zM429 166h1v3h-1zM429 172h1v3h-1zM429 178h1v3h-1zM429 184h1v3h-1zM429 190h1v3h-1zM429 196h1v3h-1zM429 202h1v3h-1zM429 208h1v3h-1zM429 214h1v3h-1zM429 220h1v3h-1zM429 226h1v3h-1zM429 232h1v3h-1zM429 238h1v3h-1zM429 244h1v3h-1zM429 250h1v3h-1zM429 256h1v3h-1zM429 262h1v3h-1zM429 268h1v3h-1zM429 274h1v3h-1zM429 280h1v3h-1zM429 286h1v3h-1zM429 292h1v3h-1z" fill="#808080"/><path d="M496 70h1v3h-1zM496 76h1v3h-1zM496 82h1v3h-1zM496 88h1v3h-1zM496 94h1v3h-1zM496 100h1v3h-1zM496 106h1v3h-1zM496 112h1v3h-1zM496 118h1v3h-1zM496 124h1v3h-1zM496 130h1v3h-1zM496 136h1v3h-1zM496 142h1v3h-1zM496 148h1v3h-1zM496 154h1v3h-1zM496 160h1v3h-1zM496 166h1v3h-1zM496 172h1v3h-1zM496 178h1v3h-1zM496 184h1v3h-1zM496 190h1v3h-1zM496 196h1v3h-1zM496 202h1v3h-1zM496 208h1v3h-1zM496 214h1v3h-1zM496 220h1v3h-1zM496 226h1v3h-1zM496 232h1v3h-1zM496 238h1v3h-1zM496 244h1v3h-1zM496 250h1v3h-1zM496 256h1v3h-1zM496 262h1v3h-1zM496 268h1v3h-1zM496 274h1v3h-1zM496 280h1v3h-1zM496 286h1v3h-1zM496 292h1v3h-1z" fill="#808080"/><path d="M563 70h1v3h-1zM563 76h1v3h-1zM563 82h1v3h-1zM563 88h1v3h-1zM563 94h1v3h-1zM563 100h1v3h-1zM563 106h1v3h-1zM563 112h1v3h-1zM563 118h1v3h-1zM563 124h1v3h-1zM563 130h1v3h-1zM563 136h1v3h-1zM563 142h1v3h-1zM563 148h1v3h-1zM563 154h1v3h-1zM563 160h1v3h-1zM563 166h1v3h-1zM563 172h1v3h-1zM563 178h1v3h-1zM563 184h1v3h-1zM563 190h1v3h-1zM563 196h1v3h-1zM563 202h1v3h-1zM563 208h1v3h-1zM563 214h1v3h-1zM563 220h1v3h-1zM563 226h1v3h-1zM563 232h1v3h-1zM563 238h1v3h-1zM563 244h1v3h-1zM563 250h1v3h-1zM563 256h1v3h-1zM563 262h1v3h-1zM563 268h1v3h-1zM563 274h1v3h-1zM563 280h1v3h-1zM563 286h1v3h-1zM563 292h1v3h-1z" fill="#808080"/><path d="M629 70h1v3h-1zM629 76h1v3h-1zM629 82h1v3h-1zM629 88h1v3h-1zM629 94h1v3h-1zM629 100h1v3h-1zM629 106h1v3h-1zM629 112h1v3h-1zM629 118h1v3h-1zM629 124h1v3h-1zM629 130h1v3h-1zM629 136h1v3h-1zM629 142h1v3h-1zM629 148h1v3h-1zM629 154h1v3h-1zM629 160h1v3h-1zM629 166h1v3h-1zM629 172h1v3h-1zM629 178h1v3h-1zM629 184h1v3h-1zM629 190h1v3h-1zM629 196h1v3h-1zM629 202h1v3h-1zM629 208h1v3h-1zM629 214h1v3h-1zM629 220h1v3h-1zM629 226h1v3h-1zM629 232h1v3h-1zM629 238h1v3h-1zM629 244h1v3h-1zM629 250h1v3h-1zM629 256h1v3h-1zM629 262h1v3h-1zM629 268h1v3h-1zM629 274h1v3h-1zM629 280h1v3h-1zM629 286h1v3h-1zM629 292h1v3h-1z" fill="#808080"/><path d="M696 70h1v3h-1zM696 76h1v3h-1zM696 82h1v3h-1zM696 88h1v3h-1zM696 94h1v3h-1zM696 100h1v3h-1zM696 106h1v3h-1zM696 112h1v3h-1zM696 118h1v3h-1zM696 124h1v3h-1zM696 130h1v3h-1zM696 136h1v3h-1zM696 142h1v3h-1zM696 148h1v3h-1zM696 154h1v3h-1zM696 160h1v3h-1zM696 166h1v3h-1zM696 172h1v3h-1zM696 178h1v3h-1zM696 184h1v3h-1zM696 190h1v3h-1zM696 196h1v3h-1zM696 202h1v3h-1zM696 208h1v3h-1zM696 214h1v3h-1zM696 220h1v3h-1zM696 226h1v3h-1zM696 232h1v3h-1zM696 238h1v3h-1zM696 244h1v3h-1zM696 250h1v3h-1zM696 256h1v3h-1zM696 262h1v3h-1zM696 268h1v3h-1zM696 274h1v3h-1zM696 280h1v3h-1zM696 286h1v3h-1zM696 292h1v3h-1z" fill="#808080"/><rect x="95" y="300" width="1" height="4" fill="#808080"/><rect x="112" y="300" width="1" height="2" fill="#808080"/><rect x="128" y="300" width="1" height="2" fill="#808080"/><rect x="145" y="300" width="1" height="2" fill="#808080"/><rect x="162" y="300" width="1" height="4" fill="#808080"/><rect x="178" y="300" width="1" height="2" fill="#808080"/><rect x="195" y="300" width="1" height="2" fill="#808080"/><rect x="212" y="300" width="1" height="2" fill="#808080"/><rect x="229" y="300" width="1" height="4" fill="#808080"/><rect x="245" y="300" width="1" height="2" fill="#808080"/><rect x="262" y="300" width="1" height="2" fill="#808080"/><rect x="279" y="300" width="1" height="2" fill="#808080"/><rect x="295" y="300" width="1" height="4" fill="#808080"/><rect x="312" y="300" width="1" height="2" fill="#808080"/><rect x="329" y="300" width="1" height="2" fill="#808080"/><rect x="346" y="300" width="1" height="2" fill="#808080"/><rect x="362" y="300" width="1" height="4" fill="#808080"/><rect x="379" y="300" width="1" height="2" fill="#808080"/><rect x="396" y="300" width="1" height="2" fill="#808080"/><rect x="412" y="300" width="1" height="2" fill="#808080"/><rect x="429" y="300" width="1" height="4" fill="#808080"/><rect x="446" y="300" width="1" height="2" fill="#808080"/><rect x="462" y="300" width="1" height="2" fill="#808080"/><rect x="479" y="300" width="1" height="2" fill="#808080"/><rect x="496" y="300" width="1" height="4" fill="#808080"/><rect x="512" y="300" width="1" height="2" fill="#808080"/><rect x="529" y="300" width="1" height="2" fill="#808080"/><rect x="546" y="300" width="1" height="2" fill="#808080"/><rect x="563" y="300" width="1" height="4" fill="#808080"/><rect x="579" y="300" width="1" height="2" fill="#808080"/><rect x="596" y="300" width="1" height="2" fill="#808080"/><rect x="613" y="300" width="1" height="2" fill="#808080"/><rect x="629" y="300" width="1" height="4" fill="#808080"/><rect x="646" y="300" width="1" height="2" fill="#808080"/><rect x="663" y="300" width="1" height="2" fill="#808080"/><rect x="680" y="300" width="1" height="2" fill="#808080"/><rect x="696" y="300" width="1" height="4" fill="#808080"/><rect x="713" y="300" width="1" height="2" fill="#808080"/><rect x="730" y="300" width="1" height="2" fill="#808080"/><rect x="746" y="300" width="1" height="2" fill="#808080"/><rect x="763" y="300" width="1" height="4" fill="#808080"/><path d="M96 95h2v14h-2zM97 107h2v14h-2zM98 119h2v13h-2zM100 130h2v2h-2zM101 130h2v2h-2zM102 130h2v2h-2zM103 130h2v2h-2zM104 130h2v2h-2zM104 130h2v4h-2zM106 131h2v3h-2zM107 131h2v2h-2zM108 131h2v2h-2zM109 131h2v2h-2zM110 131h2v2h-2zM111 131h2v2h-2zM111 131h2v5h-2zM113 124h2v12h-2zM114 114h2v12h-2zM115 103h2v13h-2zM115 103h2v3h-2zM116 104h2v12h-2zM117 114h2v12h-2zM118 124h2v11h-2zM120 132h2v3h-2zM121 130h2v4h-2zM122 130h2v2h-2zM123 130h2v2h-2zM124 130h2v2h-2zM125 130h2v2h-2zM126 130h2v2h-2zM127 130h2v2h-2zM128 130h2v2h-2zM129 130h2v2h-2zM130 130h2v2h-2zM130 130h2v3h-2zM132 131h2v2h-2zM133 131h2v2h-2zM134 120h2v13h-2zM135 109h2v13h-2zM136 98h2v13h-2zM137 98h2v2h-2zM137 98h2v13h-2zM138 109h2v13h-2zM139 120h2v12h-2zM141 130h2v2h-2zM142 130h2v2h-2zM143 130h2v2h-2zM144 130h2v2h-2zM145 130h2v2h-2zM146 130h2v2h-2zM147 130h2v2h-2zM148 130h2v2h-2zM149 130h2v2h-2zM150 130h2v2h-2zM151 128h2v4h-2zM152 128h2v2h-2zM153 128h2v2h-2zM154 128h2v2h-2zM155 112h2v18h-2zM156 94h2v20h-2zM157 76h2v20h-2zM157 76h2v3h-2zM158 77h2v28h-2zM159 103h2v27h-2zM161 128h2v2h-2zM162 128h2v2h-2zM163 128h2v2h-2zM164 128h2v2h-2zM165 128h2v2h-2zM166 128h2v2h-2zM167 128h2v2h-2zM168 128h2v2h-2zM169 128h2v2h-2zM170 127h2v3h-2zM171 127h2v2h-2zM172 127h2v2h-2zM172 127h2v4h-2zM174 129h2v2h-2zM175 129h2v2h-2zM176 113h2v18h-2zM177 95h2v20h-2zM178 77h2v20h-2zM179 77h2v2h-2zM179 77h2v34h-2zM180 109h2v31h-2zM182 134h2v6h-2zM183 130h2v6h-2zM184 128h2v4h-2zM185 127h2v3h-2zM186 127h2v2h-2zM186 127h2v3h-2zM188 128h2v2h-2zM189 128h2v2h-2zM190 128h2v2h-2zM191 128h2v2h-2zM192 128h2v2h-2zM193 128h2v2h-2zM194 128h2v2h-2zM195 128h2v2h-2zM196 128h2v2h-2zM197 110h2v20h-2zM198 92h2v20h-2zM199 74h2v20h-2zM200 74h2v2h-2zM200 74h2v30h-2zM201 102h2v28h-2zM203 128h2v2h-2zM204 128h2v2h-2zM205 128h2v2h-2zM206 128h2v2h-2zM207 128h2v2h-2zM208 128h2v2h-2zM209 128h2v2h-2zM209 128h2v3h-2zM211 129h2v2h-2zM212 127h2v4h-2zM213 127h2v2h-2zM213 127h2v3h-2zM215 128h2v2h-2zM216 128h2v2h-2zM217 128h2v2h-2zM218 111h2v19h-2zM219 96h2v17h-2zM220 79h2v19h-2zM221 79h2v2h-2zM221 79h2v26h-2zM222 103h2v27h-2zM224 128h2v2h-2zM225 128h2v2h-2zM226 128h2v2h-2zM227 128h2v2h-2zM228 128h2v2h-2zM229 128h2v2h-2zM230 128h2v2h-2zM231 128h2v2h-2zM232 128h2v2h-2zM233 128h2v2h-2zM234 127h2v3h-2zM235 127h2v2h-2zM236 127h2v2h-2zM237 127h2v2h-2zM238 127h2v2h-2zM239 107h2v22h-2zM240 89h2v20h-2zM241 70h2v21h-2zM242 70h2v2h-2zM242 70h2v34h-2zM243 102h2v33h-2zM245 131h2v4h-2zM246 129h2v4h-2zM247 129h2v2h-2zM247 129h2v5h-2zM248 132h2v4h-2zM249 134h2v3h-2zM251 128h2v9h-2zM252 127h2v3h-2zM253 127h2v2h-2zM254 127h2v2h-2zM255 127h2v2h-2zM255 127h2v3h-2zM257 128h2v2h-2zM258 128h2v2h-2zM259 128h2v2h-2zM260 110h2v20h-2zM261 92h2v20h-2zM262 73h2v21h-2zM263 73h2v2h-2zM263 73h2v30h-2zM264 101h2v28h-2zM266 127h2v2h-2zM267 127h2v2h-2zM268 127h2v2h-2zM269 127h2v2h-2zM270 127h2v2h-2zM271 127h2v2h-2zM272 127h2v2h-2zM273 127h2v2h-2zM274 127h2v2h-2zM275 127h2v2h-2zM276 127h2v2h-2zM276 127h2v3h-2zM278 128h2v2h-2zM279 128h2v2h-2zM280 128h2v2h-2zM281 110h2v20h-2zM282 93h2v19h-2zM283 75h2v20h-2zM284 75h2v2h-2zM284 75h2v29h-2zM285 102h2v27h-2zM287 127h2v2h-2zM288 127h2v2h-2zM289 127h2v2h-2zM290 127h2v2h-2zM291 127h2v2h-2zM292 127h2v2h-2zM293 127h2v2h-2zM294 127h2v2h-2zM295 127h2v2h-2zM296 127h2v2h-2zM297 127h2v2h-2zM298 127h2v2h-2zM299 127h2v2h-2zM300 127h2v2h-2zM301 127h2v2h-2zM302 110h2v19h-2zM303 92h2v20h-2zM304 73h2v21h-2zM304 73h2v3h-2zM305 74h2v29h-2zM306 101h2v29h-2zM308 128h2v2h-2zM309 128h2v2h-2zM310 128h2v2h-2zM311 128h2v2h-2zM312 128h2v2h-2zM313 127h2v3h-2zM314 127h2v2h-2zM315 127h2v2h-2zM316 127h2v2h-2zM317 127h2v2h-2zM318 127h2v2h-2zM319 127h2v2h-2zM320 127h2v2h-2zM321 127h2v2h-2zM322 127h2v2h-2zM323 110h2v19h-2zM324 92h2v20h-2zM325 74h2v20h-2zM325 74h2v3h-2zM326 75h2v29h-2zM327 102h2v27h-2zM329 127h2v2h-2zM330 127h2v2h-2zM331 127h2v2h-2zM331 127h2v3h-2zM333 128h2v2h-2zM334 128h2v2h-2zM335 127h2v3h-2zM336 127h2v2h-2zM337 127h2v2h-2zM338 127h2v2h-2zM339 127h2v2h-2zM340 127h2v2h-2zM341 127h2v2h-2zM341 127h2v4h-2zM343 129h2v2h-2zM344 101h2v30h-2zM345 71h2v32h-2zM346 71h2v2h-2zM346 71h2v22h-2zM347 91h2v21h-2zM348 110h2v19h-2zM350 127h2v2h-2zM351 127h2v2h-2zM352 127h2v2h-2zM353 127h2v2h-2zM354 127h2v2h-2zM355 127h2v2h-2zM356 126h2v3h-2zM356 126h2v3h-2zM357 127h2v3h-2zM358 128h2v4h-2zM359 130h2v3h-2zM361 129h2v4h-2zM362 128h2v3h-2zM363 127h2v3h-2zM364 127h2v2h-2zM365 101h2v28h-2zM366 73h2v30h-2zM366 73h2v3h-2zM367 74h2v20h-2zM368 92h2v20h-2zM369 110h2v20h-2zM370 128h2v3h-2zM371 129h2v3h-2zM372 130h2v4h-2zM373 132h2v3h-2zM375 133h2v2h-2zM376 131h2v4h-2zM377 128h2v5h-2zM378 128h2v2h-2zM378 128h2v4h-2zM379 130h2v4h-2zM381 132h2v2h-2zM382 131h2v3h-2zM383 129h2v4h-2zM384 128h2v3h-2zM385 127h2v3h-2zM386 101h2v28h-2zM387 77h2v26h-2zM387 77h2v3h-2zM388 78h2v19h-2zM389 95h2v19h-2zM390 112h2v18h-2zM392 128h2v2h-2zM393 128h2v2h-2zM394 128h2v2h-2zM395 128h2v2h-2zM396 128h2v2h-2zM397 128h2v2h-2zM398 127h2v3h-2zM399 127h2v2h-2zM400 127h2v2h-2zM401 127h2v2h-2zM402 127h2v2h-2zM403 127h2v2h-2zM404 127h2v2h-2zM405 127h2v2h-2zM406 127h2v2h-2zM407 102h2v27h-2zM408 75h2v29h-2zM408 75h2v3h-2zM409 76h2v20h-2zM410 94h2v19h-2zM411 111h2v20h-2zM413 129h2v2h-2zM414 128h2v3h-2zM415 127h2v3h-2zM416 127h2v2h-2zM417 127h2v2h-2zM418 127h2v2h-2zM419 127h2v2h-2zM420 127h2v2h-2zM420 127h2v4h-2zM421 129h2v4h-2zM423 129h2v4h-2zM424 128h2v3h-2zM425 127h2v3h-2zM426 127h2v2h-2zM427 127h2v2h-2zM428 103h2v26h-2zM429 76h2v29h-2zM429 76h2v3h-2zM430 77h2v20h-2zM431 95h2v19h-2zM432 112h2v19h-2zM434 128h2v3h-2zM435 128h2v2h-2zM436 128h2v2h-2zM437 128h2v2h-2zM438 128h2v2h-2zM439 128h2v2h-2zM440 128h2v2h-2zM441 127h2v3h-2zM442 127h2v2h-2zM443 127h2v2h-2zM444 127h2v2h-2zM445 127h2v2h-2zM446 127h2v2h-2zM447 127h2v2h-2zM448 127h2v2h-2zM449 101h2v28h-2zM450 74h2v29h-2zM450 74h2v3h-2zM451 75h2v20h-2zM452 93h2v19h-2zM453 110h2v19h-2zM455 127h2v2h-2zM456 127h2v2h-2zM457 127h2v2h-2zM457 127h2v3h-2zM459 128h2v2h-2zM460 128h2v2h-2zM461 127h2v3h-2zM462 127h2v2h-2zM463 127h2v2h-2zM463 127h2v3h-2zM465 128h2v2h-2zM466 128h2v2h-2zM467 127h2v3h-2zM468 127h2v2h-2zM469 127h2v2h-2zM470 100h2v29h-2zM471 72h2v30h-2zM471 72h2v3h-2zM472 73h2v20h-2zM473 91h2v21h-2zM474 110h2v19h-2zM476 127h2v2h-2zM477 127h2v2h-2zM478 127h2v2h-2zM479 127h2v2h-2zM480 127h2v2h-2zM481 127h2v2h-2zM482 127h2v2h-2zM483 127h2v2h-2zM484 127h2v2h-2zM485 127h2v2h-2zM486 127h2v2h-2zM487 127h2v2h-2zM488 127h2v2h-2zM488 127h2v3h-2zM490 128h2v2h-2zM491 102h2v28h-2zM492 75h2v29h-2zM492 75h2v3h-2zM493 76h2v19h-2zM494 93h2v19h-2zM495 110h2v19h-2zM497 127h2v2h-2zM498 127h2v2h-2zM499 127h2v2h-2zM500 127h2v2h-2zM501 127h2v2h-2zM502 127h2v2h-2zM503 127h2v2h-2zM504 127h2v2h-2zM504 127h2v5h-2zM505 130h2v4h-2zM507 130h2v4h-2zM508 127h2v5h-2zM508 127h2v3h-2zM509 128h2v4h-2zM510 130h2v4h-2zM512 105h2v29h-2zM513 78h2v29h-2zM513 78h2v3h-2zM514 79h2v19h-2zM515 96h2v18h-2zM516 112h2v18h-2zM518 128h2v2h-2zM519 128h2v2h-2zM520 128h2v2h-2zM521 127h2v3h-2zM522 127h2v2h-2zM523 127h2v2h-2zM524 127h2v2h-2zM525 127h2v2h-2zM525 127h2v3h-2zM527 128h2v2h-2zM528 128h2v2h-2zM529 128h2v2h-2zM530 128h2v2h-2zM531 128h2v2h-2zM532 110h2v20h-2zM533 92h2v20h-2zM534 75h2v19h-2zM534 75h2v3h-2zM535 76h2v19h-2zM536 93h2v19h-2zM537 110h2v20h-2zM539 128h2v2h-2zM540 128h2v2h-2zM541 128h2v2h-2zM542 128h2v2h-2zM543 128h2v2h-2zM544 128h2v2h-2zM545 127h2v3h-2zM546 127h2v2h-2zM547 127h2v2h-2zM548 127h2v2h-2zM549 127h2v2h-2zM550 127h2v2h-2zM551 127h2v2h-2zM552 127h2v2h-2zM553 110h2v19h-2zM554 91h2v21h-2zM555 72h2v21h-2zM555 72h2v3h-2zM556 73h2v21h-2zM557 92h2v21h-2zM558 111h2v19h-2zM560 128h2v2h-2zM561 128h2v2h-2zM562 128h2v2h-2zM563 128h2v2h-2zM564 128h2v2h-2zM565 128h2v2h-2zM566 128h2v2h-2zM567 128h2v2h-2zM568 128h2v2h-2zM569 128h2v2h-2zM570 128h2v2h-2zM570 128h2v4h-2zM571 130h2v4h-2zM572 132h2v5h-2zM574 116h2v21h-2zM575 96h2v22h-2zM576 75h2v23h-2zM576 75h2v3h-2zM577 76h2v19h-2zM578 93h2v19h-2zM579 110h2v20h-2zM581 127h2v3h-2zM582 127h2v2h-2zM583 127h2v2h-2zM584 127h2v2h-2zM585 127h2v2h-2zM586 127h2v2h-2zM587 127h2v2h-2zM588 127h2v2h-2zM589 127h2v2h-2zM590 127h2v2h-2zM591 127h2v2h-2zM592 127h2v2h-2zM593 127h2v2h-2zM594 127h2v2h-2zM595 110h2v19h-2zM596 94h2v18h-2zM597 77h2v19h-2zM597 77h2v3h-2zM598 78h2v19h-2zM599 95h2v18h-2zM600 111h2v19h-2zM602 128h2v2h-2zM603 128h2v2h-2zM604 127h2v3h-2zM605 127h2v2h-2zM606 127h2v2h-2zM607 127h2v2h-2zM608 127h2v2h-2zM609 127h2v2h-2zM610 127h2v2h-2zM611 127h2v2h-2zM612 127h2v2h-2zM613 127h2v2h-2zM614 127h2v2h-2zM615 127h2v2h-2zM616 110h2v19h-2zM617 94h2v18h-2zM618 76h2v20h-2zM618 76h2v3h-2zM619 77h2v19h-2zM620 94h2v19h-2zM621 111h2v19h-2zM623 128h2v2h-2zM624 128h2v2h-2zM625 127h2v3h-2zM626 127h2v2h-2zM627 127h2v2h-2zM628 127h2v2h-2zM628 127h2v3h-2zM630 128h2v2h-2zM631 128h2v2h-2zM632 128h2v2h-2zM633 128h2v2h-2zM634 128h2v2h-2zM635 128h2v2h-2zM635 128h2v5h-2zM637 114h2v19h-2zM638 94h2v22h-2zM639 74h2v22h-2zM639 74h2v3h-2zM640 75h2v20h-2zM641 93h2v20h-2zM642 111h2v20h-2zM644 129h2v2h-2zM645 129h2v2h-2zM646 127h2v4h-2zM647 127h2v2h-2zM648 127h2v2h-2zM649 127h2v2h-2zM650 127h2v2h-2zM651 127h2v2h-2zM652 127h2v2h-2zM653 127h2v2h-2zM654 127h2v2h-2zM655 127h2v2h-2zM656 127h2v2h-2zM657 127h2v2h-2zM658 110h2v19h-2zM659 92h2v20h-2zM660 74h2v20h-2zM660 74h2v3h-2zM661 75h2v29h-2zM662 102h2v27h-2zM664 127h2v2h-2zM665 127h2v2h-2zM666 127h2v2h-2zM667 127h2v2h-2zM668 127h2v2h-2zM669 127h2v2h-2zM669 127h2v4h-2zM670 129h2v3h-2zM672 129h2v3h-2zM673 127h2v4h-2zM674 127h2v2h-2zM675 127h2v2h-2zM676 127h2v2h-2zM677 127h2v2h-2zM678 127h2v2h-2zM679 110h2v19h-2zM680 92h2v20h-2zM681 75h2v19h-2zM681 75h2v3h-2zM682 76h2v27h-2zM683 101h2v28h-2zM685 127h2v2h-2zM686 127h2v2h-2zM687 127h2v2h-2zM688 127h2v2h-2zM688 127h2v3h-2zM690 128h2v2h-2zM691 128h2v2h-2zM692 128h2v2h-2zM693 128h2v2h-2zM694 128h2v2h-2zM695 128h2v2h-2zM696 128h2v2h-2zM697 128h2v2h-2zM698 128h2v2h-2zM699 128h2v2h-2zM700 110h2v20h-2zM701 93h2v19h-2zM702 75h2v20h-2zM702 75h2v3h-2zM703 76h2v31h-2zM704 105h2v30h-2zM706 128h2v7h-2zM707 127h2v3h-2zM708 127h2v2h-2zM709 127h2v2h-2zM710 127h2v2h-2zM711 127h2v2h-2zM712 127h2v2h-2zM713 127h2v2h-2zM714 127h2v2h-2zM715 127h2v2h-2zM716 127h2v2h-2zM717 127h2v2h-2zM717 127h2v3h-2zM719 128h2v2h-2zM720 128h2v2h-2zM721 110h2v20h-2zM722 91h2v21h-2zM723 71h2v22h-2zM723 71h2v3h-2zM724 72h2v30h-2zM725 100h2v29h-2zM727 127h2v2h-2zM728 127h2v2h-2zM729 127h2v2h-2zM730 127h2v2h-2zM731 127h2v2h-2zM732 127h2v2h-2zM733 127h2v2h-2zM734 127h2v2h-2zM735 127h2v2h-2zM736 127h2v2h-2zM737 127h2v2h-2zM737 127h2v6h-2zM738 131h2v5h-2zM740 133h2v3h-2zM741 130h2v5h-2zM742 110h2v22h-2zM743 92h2v20h-2zM744 73h2v21h-2zM744 73h2v3h-2zM745 74h2v31h-2zM746 103h2v29h-2zM748 130h2v2h-2zM749 130h2v2h-2zM750 130h2v2h-2zM751 129h2v3h-2zM752 128h2v3h-2zM753 127h2v3h-2zM754 126h2v3h-2zM754 126h2v3h-2zM755 127h2v3h-2zM757 128h2v2h-2zM758 128h2v2h-2zM759 128h2v2h-2zM760 110h2v20h-2zM761 91h2v21h-2zM762 72h2v21h-2zM763 72h1v2h-1z" fill="#ff0000"/><path d="M763 70h1v3h-1zM763 76h1v3h-1zM763 82h1v3h-1zM763 88h1v3h-1zM763 94h1v3h-1zM763 100h1v3h-1zM763 106h1v3h-1zM763 112h1v3h-1zM763 118h1v3h-1zM763 124h1v3h-1zM763 130h1v3h-1zM763 136h1v3h-1zM763 142h1v3h-1zM763 148h1v3h-1zM763 154h1v3h-1zM763 160h1v3h-1zM763 166h1v3h-1zM763 172h1v3h-1zM763 178h1v3h-1zM763 184h1v3h-1zM763 190h1v3h-1zM763 196h1v3h-1zM763 202h1v3h-1zM763 208h1v3h-1zM763 214h1v3h-1zM763 220h1v3h-1zM763 226h1v3h-1zM763 232h1v3h-1zM763 238h1v3h-1zM763 244h1v3h-1zM763 250h1v3h-1zM763 256h1v3h-1zM763 262h1v3h-1zM763 268h1v3h-1zM763 274h1v3h-1zM763 280h1v3h-1zM763 286h1v3h-1zM763 292h1v3h-1z" fill="#000"/><rect x="94" y="70" width="669" height="1" fill="#000"/><rect x="94" y="70" width="2" height="230" fill="#000"/><rect x="94" y="298" width="670" height="2" fill="#000"/><path d="M95 299h3v1h-3zM101 299h3v1h-3zM107 299h3v1h-3zM113 299h3v1h-3zM119 299h3v1h-3zM125 299h3v1h-3zM131 299h3v1h-3zM137 299h3v1h-3zM143 299h3v1h-3zM149 299h3v1h-3zM155 299h3v1h-3zM161 299h3v1h-3zM167 299h3v1h-3zM173 299h3v1h-3zM179 299h3v1h-3zM185 299h3v1h-3zM191 299h3v1h-3zM197 299h3v1h-3zM203 299h3v1h-3zM209 299h3v1h-3zM215 299h3v1h-3zM221 299h3v1h-3zM227 299h3v1h-3zM233 299h3v1h-3zM239 299h3v1h-3zM245 299h3v1h-3zM251 299h3v1h-3zM257 299h3v1h-3zM263 299h3v1h-3zM269 299h3v1h-3zM275 299h3v1h-3zM281 299h3v1h-3zM287 299h3v1h-3zM293 299h3v1h-3zM299 299h3v1h-3zM305 299h3v1h-3zM311 299h3v1h-3zM317 299h3v1h-3zM323 299h3v1h-3zM329 299h3v1h-3zM335 299h3v1h-3zM341 299h3v1h-3zM347 299h3v1h-3zM353 299h3v1h-3zM359 299h3v1h-3zM365 299h3v1h-3zM371 299h3v1h-3zM377 299h3v1h-3zM383 299h3v1h-3zM389 299h3v1h-3zM395 299h3v1h-3zM401 299h3v1h-3zM407 299h3v1h-3zM413 299h3v1h-3zM419 299h3v1h-3zM425 299h3v1h-3zM431 299h3v1h-3zM437 299h3v1h-3zM443 299h3v1h-3zM449 299h3v1h-3zM455 299h3v1h-3zM461 299h3v1h-3zM467 299h3v1h-3zM473 299h3v1h-3zM479 299h3v1h-3zM485 299h3v1h-3zM491 299h3v1h-3zM497 299h3v1h-3zM503 299h3v1h-3zM509 299h3v1h-3zM515 299h3v1h-3zM521 299h3v1h-3zM527 299h3v1h-3zM533 299h3v1h-3zM539 299h3v1h-3zM545 299h3v1h-3zM551 299h3v1h-3zM557 299h3v1h-3zM563 299h3v1h-3zM569 299h3v1h-3zM575 299h3v1h-3zM581 299h3v1h-3zM587 299h3v1h-3zM593 299h3v1h-3zM599 299h3v1h-3zM605 299h3v1h-3zM611 299h3v1h-3zM617 299h3v1h-3zM623 299h3v1h-3zM629 299h3v1h-3zM635 299h3v1h-3zM641 299h3v1h-3zM647 299h3v1h-3zM653 299h3v1h-3zM659 299h3v1h-3zM665 299h3v1h-3zM671 299h3v1h-3zM677 299h3v1h-3zM683 299h3v1h-3zM689 299h3v1h-3zM695 299h3v1h-3zM701 299h3v1h-3zM707 299h3v1h-3zM713 299h3v1h-3zM719 299h3v1h-3zM725 299h3v1h-3zM731 299h3v1h-3zM737 299h3v1h-3zM743 299h3v1h-3zM749 299h3v1h-3zM755 299h3v1h-3zM761 299h3v1h-3z" fill="#808080"/><rect x="95" y="299" width="1" height="1" fill="#808080"/><rect x="162" y="299" width="1" height="1" fill="#808080"/><rect x="229" y="299" width="1" height="1" fill="#808080"/><rect x="295" y="299" width="1" height="1" fill="#808080"/><rect x="362" y="299" width="1" height="1" fill="#808080"/><rect x="429" y="299" width="1" height="1" fill="#808080"/><rect x="496" y="299" width="1" height="1" fill="#808080"/><rect x="563" y="299" width="1" height="1" fill="#808080"/><rect x="629" y="299" width="1" height="1" fill="#808080"/><rect x="696" y="299" width="1" height="1" fill="#808080"/><rect x="763" y="299" width="1" height="1" fill="#808080"/><clipPath id="c1"><rect x="0" y="0" width="786" height="583"/></clipPath><g clip-path="url(#c1)"><text x="95.5" y="316" font-size="10.8" text-anchor="middle">0.2GB</text><text x="162.5" y="316" font-size="10.8" text-anchor="middle">100.2GB</text><text x="229.5" y="316" font-size="10.8" text-anchor="middle">200.2GB</text><text x="295.5" y="316" font-size="10.8" text-anchor="middle">300.2GB</text><text x="362.5" y="316" font-size="10.8" text-anchor="middle">400.2GB</text><text x="429.5" y="316" font-size="10.8" text-anchor="middle">500.2GB</text><text x="496.5" y="316" font-size="10.8" text-anchor="middle">600.2GB</text><text x="563.5" y="316" font-size="10.8" text-anchor="middle">700.2GB</text><text x="629.5" y="316" font-size="10.8" text-anchor="middle">800.2GB</text><text x="696.5" y="316" font-size="10.8" text-anchor="middle">900.2GB</text><text x="763.5" y="316" font-size="10.8" text-anchor="middle">1,000.2GB</text></g><text x="209.3" y="344" font-size="10.8" fill="#0000ff" text-anchor="middle" textLength="60.5" lengthAdjust="spacingAndGlyphs">Burst Speed</text><text x="209.5" y="358" font-size="10.8" fill="#0000ff" text-anchor="middle" textLength="80.5" lengthAdjust="spacingAndGlyphs">(higher is better)</text><path d="M84 366h1v3h-1zM84 372h1v3h-1zM84 378h1v3h-1zM84 384h1v3h-1zM84 390h1v3h-1zM84 396h1v3h-1zM84 402h1v3h-1zM84 408h1v3h-1zM84 414h1v3h-1zM84 420h1v3h-1zM84 426h1v3h-1zM84 432h1v3h-1zM84 438h1v3h-1zM84 444h1v3h-1zM84 450h1v3h-1zM84 456h1v3h-1zM84 462h1v3h-1zM84 468h1v3h-1zM84 474h1v3h-1zM84 480h1v3h-1zM84 486h1v3h-1zM84 492h1v3h-1zM84 498h1v3h-1zM84 504h1v3h-1zM84 510h1v3h-1zM84 516h1v3h-1z" fill="#808080"/><path d="M142 366h1v3h-1zM142 372h1v3h-1zM142 378h1v3h-1zM142 384h1v3h-1zM142 390h1v3h-1zM142 396h1v3h-1zM142 402h1v3h-1zM142 408h1v3h-1zM142 414h1v3h-1zM142 420h1v3h-1zM142 426h1v3h-1zM142 432h1v3h-1zM142 438h1v3h-1zM142 444h1v3h-1zM142 450h1v3h-1zM142 456h1v3h-1zM142 462h1v3h-1zM142 468h1v3h-1zM142 474h1v3h-1zM142 480h1v3h-1zM142 486h1v3h-1zM142 492h1v3h-1zM142 498h1v3h-1zM142 504h1v3h-1zM142 510h1v3h-1zM142 516h1v3h-1z" fill="#808080"/><path d="M199 366h1v3h-1zM199 372h1v3h-1zM199 378h1v3h-1zM199 384h1v3h-1zM199 390h1v3h-1zM199 396h1v3h-1zM199 402h1v3h-1zM199 408h1v3h-1zM199 414h1v3h-1zM199 420h1v3h-1zM199 426h1v3h-1zM199 432h1v3h-1zM199 438h1v3h-1zM199 444h1v3h-1zM199 450h1v3h-1zM199 456h1v3h-1zM199 462h1v3h-1zM199 468h1v3h-1zM199 474h1v3h-1zM199 480h1v3h-1zM199 486h1v3h-1zM199 492h1v3h-1zM199 498h1v3h-1zM199 504h1v3h-1zM199 510h1v3h-1zM199 516h1v3h-1z" fill="#808080"/><path d="M256 366h1v3h-1zM256 372h1v3h-1zM256 378h1v3h-1zM256 384h1v3h-1zM256 390h1v3h-1zM256 396h1v3h-1zM256 402h1v3h-1zM256 408h1v3h-1zM256 414h1v3h-1zM256 420h1v3h-1zM256 426h1v3h-1zM256 432h1v3h-1zM256 438h1v3h-1zM256 444h1v3h-1zM256 450h1v3h-1zM256 456h1v3h-1zM256 462h1v3h-1zM256 468h1v3h-1zM256 474h1v3h-1zM256 480h1v3h-1zM256 486h1v3h-1zM256 492h1v3h-1zM256 498h1v3h-1zM256 504h1v3h-1zM256 510h1v3h-1zM256 516h1v3h-1z" fill="#808080"/><path d="M314 366h1v3h-1zM314 372h1v3h-1zM314 378h1v3h-1zM314 384h1v3h-1zM314 390h1v3h-1zM314 396h1v3h-1zM314 402h1v3h-1zM314 408h1v3h-1zM314 414h1v3h-1zM314 420h1v3h-1zM314 426h1v3h-1zM314 432h1v3h-1zM314 438h1v3h-1zM314 444h1v3h-1zM314 450h1v3h-1zM314 456h1v3h-1zM314 462h1v3h-1zM314 468h1v3h-1zM314 474h1v3h-1zM314 480h1v3h-1zM314 486h1v3h-1zM314 492h1v3h-1zM314 498h1v3h-1zM314 504h1v3h-1zM314 510h1v3h-1zM314 516h1v3h-1z" fill="#808080"/><path d="M371 366h1v3h-1zM371 372h1v3h-1zM371 378h1v3h-1zM371 384h1v3h-1zM371 390h1v3h-1zM371 396h1v3h-1zM371 402h1v3h-1zM371 408h1v3h-1zM371 414h1v3h-1zM371 420h1v3h-1zM371 426h1v3h-1zM371 432h1v3h-1zM371 438h1v3h-1zM371 444h1v3h-1zM371 450h1v3h-1zM371 456h1v3h-1zM371 462h1v3h-1zM371 468h1v3h-1zM371 474h1v3h-1zM371 480h1v3h-1zM371 486h1v3h-1zM371 492h1v3h-1zM371 498h1v3h-1zM371 504h1v3h-1zM371 510h1v3h-1zM371 516h1v3h-1z" fill="#808080"/><rect x="27" y="522" width="1" height="4" fill="#808080"/><text x="27.5" y="538" font-size="10.8" text-anchor="middle" textLength="6.0" lengthAdjust="spacingAndGlyphs">0</text><rect x="41" y="522" width="1" height="2" fill="#808080"/><rect x="56" y="522" width="1" height="2" fill="#808080"/><rect x="70" y="522" width="1" height="2" fill="#808080"/><rect x="84" y="522" width="1" height="4" fill="#808080"/><text x="84.5" y="538" font-size="10.8" text-anchor="middle" textLength="18.0" lengthAdjust="spacingAndGlyphs">500</text><rect x="99" y="522" width="1" height="2" fill="#808080"/><rect x="113" y="522" width="1" height="2" fill="#808080"/><rect x="127" y="522" width="1" height="2" fill="#808080"/><rect x="142" y="522" width="1" height="4" fill="#808080"/><text x="142.5" y="538" font-size="10.8" text-anchor="middle" textLength="27.0" lengthAdjust="spacingAndGlyphs">1,000</text><rect x="156" y="522" width="1" height="2" fill="#808080"/><rect x="170" y="522" width="1" height="2" fill="#808080"/><rect x="185" y="522" width="1" height="2" fill="#808080"/><rect x="199" y="522" width="1" height="4" fill="#808080"/><text x="199.5" y="538" font-size="10.8" text-anchor="middle" textLength="27.0" lengthAdjust="spacingAndGlyphs">1,500</text><rect x="213" y="522" width="1" height="2" fill="#808080"/><rect x="228" y="522" width="1" height="2" fill="#808080"/><rect x="242" y="522" width="1" height="2" fill="#808080"/><rect x="256" y="522" width="1" height="4" fill="#808080"/><text x="256.5" y="538" font-size="10.8" text-anchor="middle" textLength="27.0" lengthAdjust="spacingAndGlyphs">2,000</text><rect x="271" y="522" width="1" height="2" fill="#808080"/><rect x="285" y="522" width="1" height="2" fill="#808080"/><rect x="299" y="522" width="1" height="2" fill="#808080"/><rect x="314" y="522" width="1" height="4" fill="#808080"/><text x="314.5" y="538" font-size="10.8" text-anchor="middle" textLength="27.0" lengthAdjust="spacingAndGlyphs">2,500</text><rect x="328" y="522" width="1" height="2" fill="#808080"/><rect x="342" y="522" width="1" height="2" fill="#808080"/><rect x="357" y="522" width="1" height="2" fill="#808080"/><rect x="371" y="522" width="1" height="4" fill="#808080"/><text x="371.5" y="538" font-size="10.8" text-anchor="middle" textLength="27.0" lengthAdjust="spacingAndGlyphs">3,000</text><rect x="26" y="366" width="372" height="1" fill="#000"/><rect x="26" y="366" width="2" height="156" fill="#000"/><rect x="26" y="520" width="372" height="2" fill="#000"/><rect x="397" y="366" width="1" height="156" fill="#000"/><rect x="28" y="377" width="267" height="22" fill="#000"/><rect x="29" y="378" width="265" height="20" fill="#ff0000"/><rect x="295" y="388" width="20" height="1" fill="#ffffff"/><rect x="315" y="382" width="72" height="15" fill="#000"/><rect x="316" y="383" width="70" height="13" fill="#ffff80"/><text x="351.0" y="392.5" font-size="10.8" text-anchor="middle" textLength="60.5" lengthAdjust="spacingAndGlyphs">2336.4 MB/s</text><rect x="28" y="414" width="36" height="22" fill="#000"/><rect x="29" y="415" width="34" height="20" fill="#808080"/><rect x="64" y="425" width="20" height="1" fill="#ffffff"/><rect x="84" y="418" width="78" height="16" fill="#000"/><rect x="85" y="419" width="76" height="14" fill="#ffff80"/><text x="123.0" y="429.5" font-size="10.8" text-anchor="middle" textLength="66.0" lengthAdjust="spacingAndGlyphs">SCSI Ultra320</text><rect x="28" y="451" width="16" height="22" fill="#000"/><rect x="29" y="452" width="14" height="20" fill="#808080"/><rect x="44" y="462" width="20" height="1" fill="#ffffff"/><rect x="64" y="455" width="62" height="16" fill="#000"/><rect x="65" y="456" width="60" height="14" fill="#ffff80"/><text x="95.0" y="466.5" font-size="10.8" text-anchor="middle" textLength="50.5" lengthAdjust="spacingAndGlyphs">SATA 150</text><rect x="28" y="489" width="14" height="21" fill="#000"/><rect x="29" y="490" width="12" height="19" fill="#808080"/><rect x="42" y="499" width="20" height="1" fill="#ffffff"/><rect x="62" y="492" width="91" height="16" fill="#000"/><rect x="63" y="493" width="89" height="14" fill="#ffff80"/><text x="107.5" y="503.5" font-size="10.8" text-anchor="middle" textLength="80.3" lengthAdjust="spacingAndGlyphs">ATA UltraDMA 6</text><text x="418" y="337.6" font-size="12.3" fill="#ff0000" font-weight="bold" textLength="156.0" lengthAdjust="spacingAndGlyphs">CT1000P5PSSD8 P7CR402</text><text x="423.8" y="350.8" font-size="12" textLength="147.0" lengthAdjust="spacingAndGlyphs">Tested on 2021-08-30 at 20:04</text><text x="423.8" y="363.8" font-size="12" textLength="111.0" lengthAdjust="spacingAndGlyphs">Random access: 0.0ms</text><text x="423.8" y="376.8" font-size="12" textLength="129.0" lengthAdjust="spacingAndGlyphs">CPU utilization: 3% (+/- 2%)</text><text x="423.8" y="389.8" font-size="12" textLength="133.0" lengthAdjust="spacingAndGlyphs">Average read: 1692.3 MB/s</text><text x="417.8" y="415.9" font-size="12" textLength="208.0" lengthAdjust="spacingAndGlyphs">Lower is better for CPU and random access.</text><text x="417.8" y="428.9" font-size="12" textLength="154.0" lengthAdjust="spacingAndGlyphs">Higher is better for average read.</text><text x="417.8" y="441.9" font-size="12" textLength="172.5" lengthAdjust="spacingAndGlyphs">MB/s = 1,000,000 bytes per second.</text><text x="417.8" y="454.9" font-size="12" textLength="126.3" lengthAdjust="spacingAndGlyphs">GB = 1,000,000,000 bytes.</text><rect x="17" y="555" width="85" height="25" fill="#696969"/><rect x="17" y="555" width="84" height="24" fill="#ffffff"/><rect x="18" y="556" width="83" height="23" fill="#a0a0a0"/><rect x="18" y="556" width="82" height="22" fill="#f0f0f0"/><text x="59.5" y="570.9" font-size="12" text-anchor="middle" textLength="63.7" lengthAdjust="spacingAndGlyphs">Save Results</text><rect x="28" y="572" width="7" height="1" fill="#000"/><rect x="117" y="555" width="93" height="25" fill="#696969"/><rect x="117" y="555" width="92" height="24" fill="#ffffff"/><rect x="118" y="556" width="91" height="23" fill="#a0a0a0"/><rect x="118" y="556" width="90" height="22" fill="#f0f0f0"/><text x="163.5" y="570.9" font-size="12" text-anchor="middle" textLength="72.4" lengthAdjust="spacingAndGlyphs">Upload Results</text><rect x="127" y="572" width="8" height="1" fill="#000"/><rect x="228" y="555" width="125" height="25" fill="#696969"/><rect x="228" y="555" width="124" height="24" fill="#ffffff"/><rect x="229" y="556" width="123" height="23" fill="#a0a0a0"/><rect x="229" y="556" width="122" height="22" fill="#f0f0f0"/><text x="290.5" y="570.9" font-size="12" text-anchor="middle" textLength="111.0" lengthAdjust="spacingAndGlyphs">Compare Another Drive</text><rect x="235" y="572" width="8" height="1" fill="#000"/><rect x="709" y="555" width="75" height="25" fill="#696969"/><rect x="710" y="556" width="72" height="22" fill="#ffffff"/><rect x="711" y="557" width="71" height="21" fill="#a0a0a0"/><rect x="711" y="557" width="70" height="20" fill="#f0f0f0"/><text x="746.5" y="570.9" font-size="12" text-anchor="middle" textLength="26.5" lengthAdjust="spacingAndGlyphs">Done</text><rect x="733" y="572" width="8" height="1" fill="#000"/><rect x="713.5" y="559.5" width="66" height="16" fill="none" stroke="#000" stroke-width="1" stroke-dasharray="1 1"/><text x="384" y="573.2" font-size="12" fill="#8ea6cf" textLength="185.6" lengthAdjust="spacingAndGlyphs">Copyright (C) 2004 Simpli Software, Inc.</text><text x="573.4" y="573.2" font-size="12" fill="#8ea6cf" textLength="115.2" lengthAdjust="spacingAndGlyphs">www.simplisoftware.com</text><rect x="1" y="581" width="792" height="1" fill="#ffffff"/><rect x="2" y="582" width="791" height="1" fill="#7a7a7a"/></svg></body></html>
